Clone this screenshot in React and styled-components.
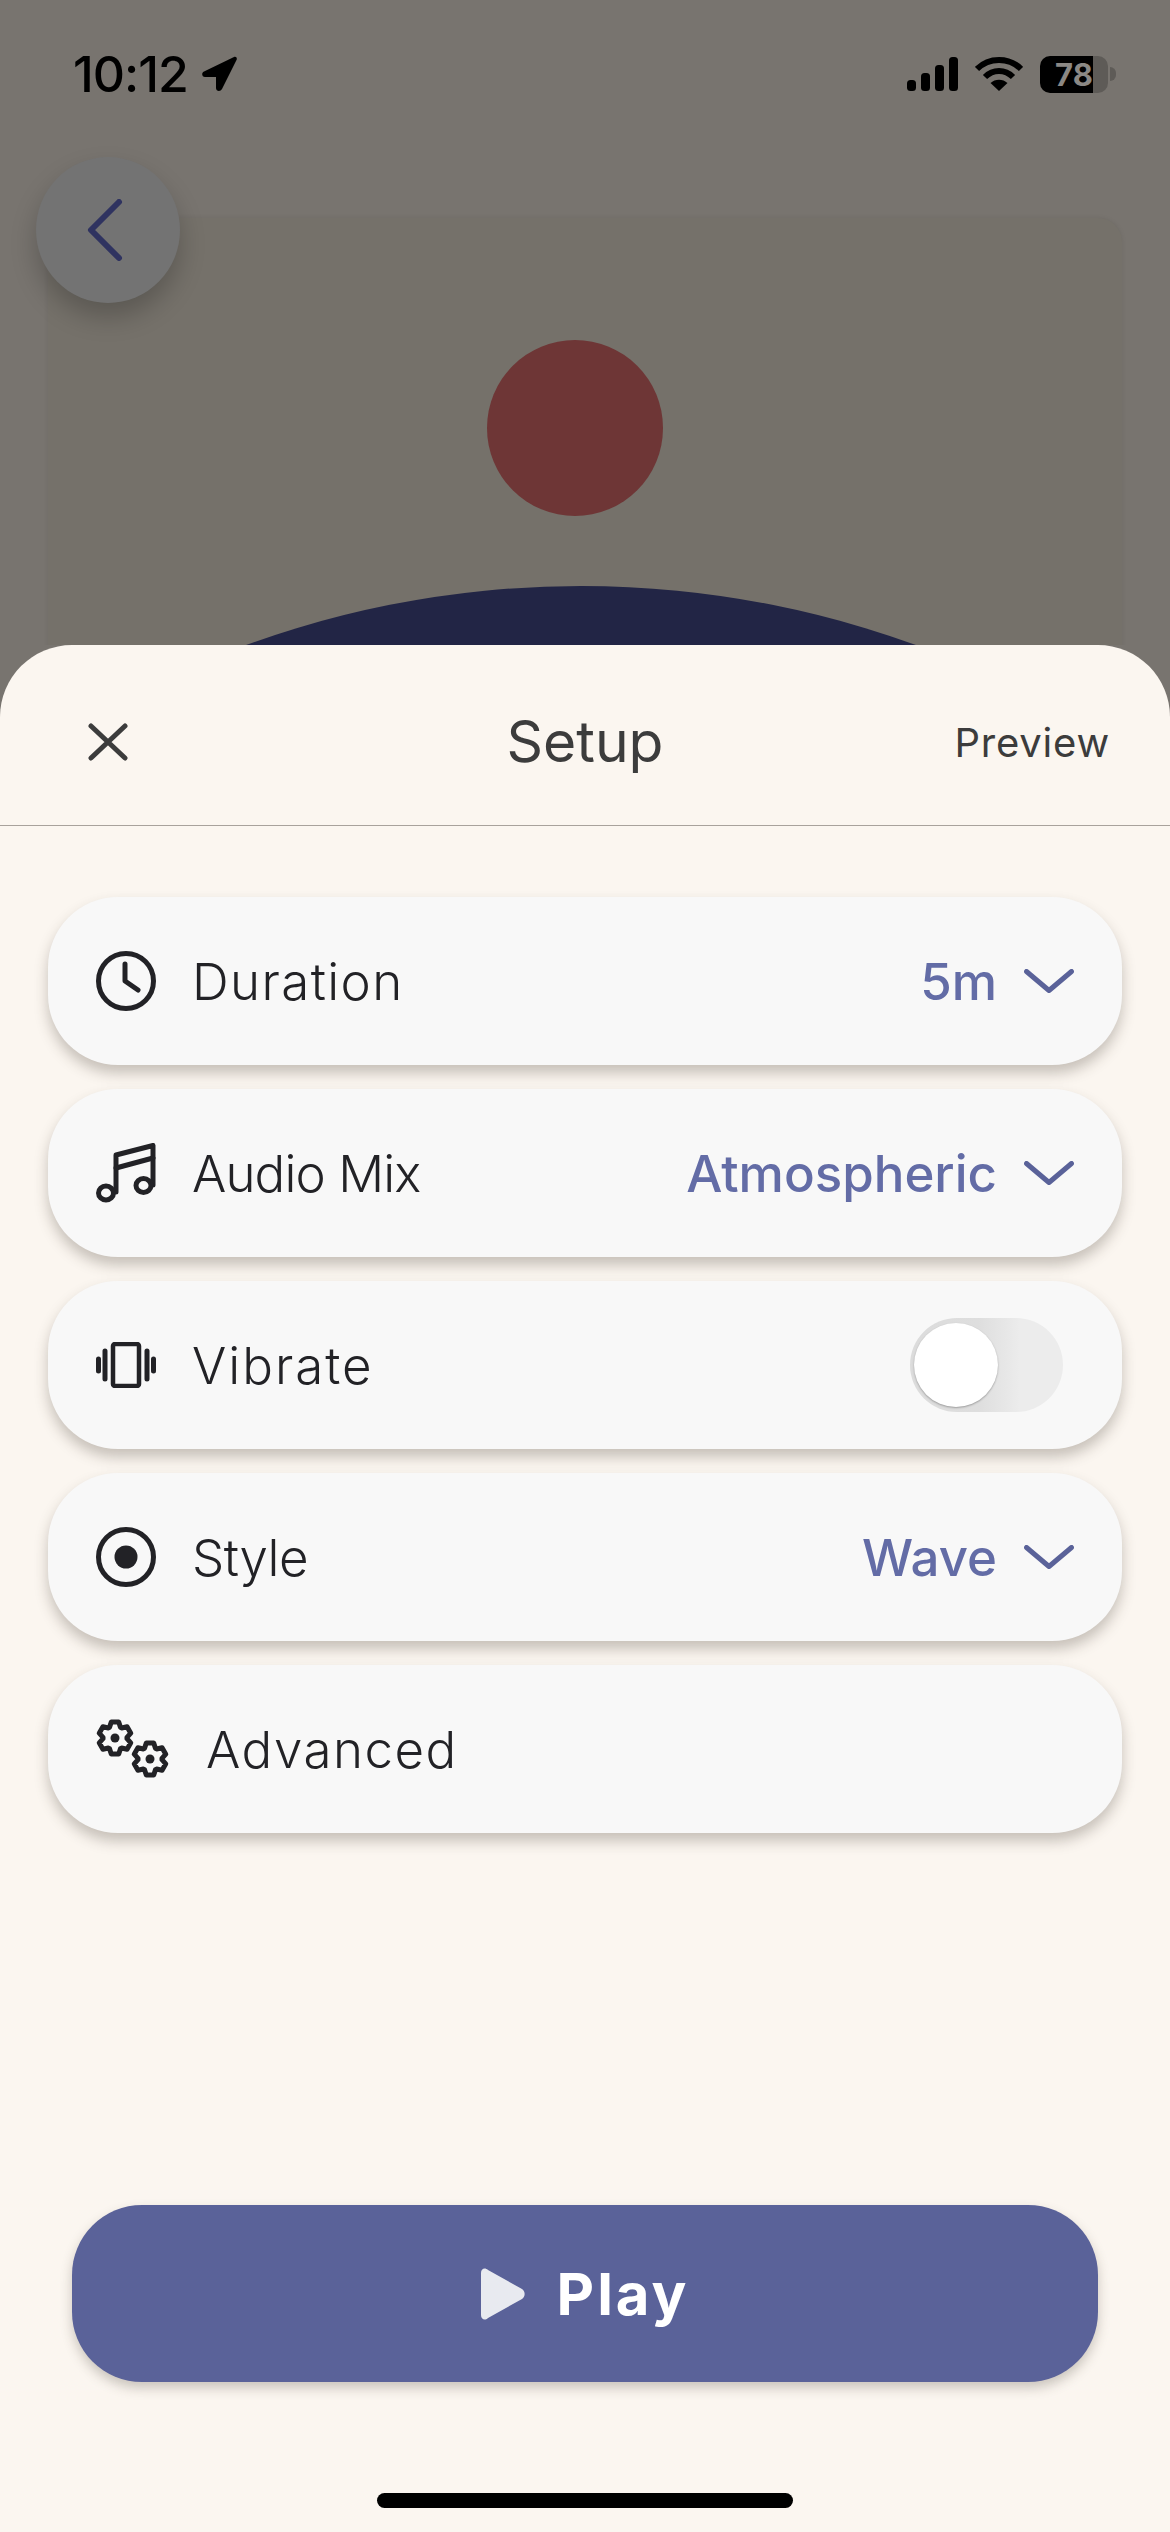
import React from 'react'
import styled, { createGlobalStyle } from 'styled-components'

const GlobalStyle = createGlobalStyle`
  html, body {
    margin: 0;
    padding: 0;
    background: #fbf6f0;
  }
  * {
    box-sizing: border-box;
  }
`
const Screen = styled.div`
  width: 1170px;
  height: 2532px;
  display: flex;
  flex-direction: column;
  background: #78746f;
  overflow: hidden;
  font-family: Inter, "Liberation Sans", sans-serif;
`
const Backdrop = styled.div`
  position: relative;
  height: 645px;
  flex-shrink: 0;
  padding: 0 48px;
  overflow: hidden;
`
const StatusBar = styled.div`
  height: 218px;
  padding: 52px 54px 0 25px;
  margin: 0 -48px 0 0;
  display: flex;
  align-items: flex-start;
  justify-content: space-between;
  color: #000;
`
const TimeGroup = styled.div`
  display: flex;
  align-items: center;
  gap: 13px;
  height: 44px;
`
const Time = styled.span`
  font-size: 50px;
  font-weight: 500;
  letter-spacing: -1px;
  line-height: 44px;
`
const StatusIcons = styled.div`
  display: flex;
  align-items: center;
  gap: 17px;
  height: 44px;
`
const Battery = styled.div`
  width: 68px;
  height: 37px;
  border-radius: 10px;
  background: linear-gradient(90deg, #000 53px, #5e5b57 53px);
  display: flex;
  align-items: center;
  justify-content: center;
  color: #8b8884;
  font-size: 31px;
  font-weight: 700;
  line-height: 37px;
`
const BatteryNub = styled.div`
  width: 6px;
  height: 14px;
  margin-left: -15px;
  border-radius: 0 6px 6px 0;
  background: #5e5b57;
`
const PreviewCard = styled.div`
  position: relative;
  height: 600px;
  border-radius: 24px;
  background: #75716a;
  box-shadow: 0 0 5px rgba(0, 0, 0, 0.08);
  padding: 122px 20px 0 0;
  overflow: hidden;
`
const RedDot = styled.div`
  width: 176px;
  height: 176px;
  margin: 0 auto;
  border-radius: 50%;
  background: #6e3636;
`
const Hill = styled.div`
  position: absolute;
  top: 368px;
  left: 50%;
  width: 1960px;
  height: 1960px;
  margin-left: -984px;
  border-radius: 50%;
  background: #222545;
`
const BackButton = styled.div`
  position: absolute;
  top: 157px;
  left: 36px;
  width: 144px;
  height: 146px;
  padding-right: 6px;
  border-radius: 50%;
  background: #737373;
  box-shadow: 0 14px 26px rgba(0, 0, 0, 0.22);
  display: flex;
  align-items: center;
  justify-content: center;
`
const Sheet = styled.div`
  flex: 1;
  display: flex;
  flex-direction: column;
  background: #fbf6f0;
  border-radius: 72px 72px 0 0;
`
const SheetHeader = styled.div`
  position: relative;
  height: 181px;
  flex-shrink: 0;
  padding: 14px 60px 0 88px;
  display: flex;
  align-items: center;
  justify-content: space-between;
  border-bottom: 1px solid #a8a29c;
`
const Title = styled.div`
  position: absolute;
  left: 0;
  right: 0;
  text-align: center;
  font-size: 57px;
  font-weight: 400;
  color: #3c3c3c;
  line-height: 60px;
`
const PreviewLink = styled.div`
  font-size: 40px;
  font-weight: 400;
  color: #3c3c3c;
  letter-spacing: 0.8px;
`
const Rows = styled.div`
  padding: 71px 48px 0;
  display: flex;
  flex-direction: column;
  gap: 24px;
`
const Row = styled.div`
  height: 168px;
  padding: 0 48px;
  border-radius: 70px;
  display: flex;
  align-items: center;
  background: #f8f8f8;
  box-shadow: 0 8px 14px rgba(60, 50, 40, 0.28);
`
const IconSlot = styled.div`
  width: ${props => props.$wide ? '74px' : '60px'};
  height: 78px;
  margin-right: ${props => props.$wide ? '36px' : '36px'};
  flex-shrink: 0;
  display: flex;
  align-items: center;
  justify-content: center;
`
const Label = styled.div`
  flex: 1;
  font-size: 51px;
  font-weight: 300;
  color: #222226;
  letter-spacing: ${props => props.$tracking}px;
`
const Value = styled.div`
  font-size: 51px;
  font-weight: 450;
  color: #636ca6;
`
const Chevron = styled.svg`
  width: 50px;
  height: 24px;
  margin-left: 27px;
  flex-shrink: 0;
`
const Toggle = styled.div`
  width: 153px;
  height: 94px;
  margin-right: 11px;
  border-radius: 47px;
  background: linear-gradient(90deg, #dcdcdc 0, #dedede 45%, #ececec 72%);
  display: flex;
  align-items: center;
`
const Knob = styled.div`
  width: 84px;
  height: 84px;
  margin-left: 4px;
  border-radius: 50%;
  background: #fff;
  box-shadow: 0 1px 2px rgba(0, 0, 0, 0.3);
`
const PlayArea = styled.div`
  margin-top: auto;
  display: flex;
  flex-direction: column;
  align-items: center;
`
const PlayButton = styled.div`
  width: 1026px;
  height: 177px;
  border-radius: 70px;
  display: flex;
  align-items: center;
  justify-content: center;
  gap: 32px;
  background: #5a6299;
  box-shadow: 0 6px 12px rgba(60, 50, 40, 0.25);
`
const PlayText = styled.span`
  font-size: 58px;
  font-weight: 700;
  color: #fff;
  letter-spacing: 3px;
`
const HomeBar = styled.div`
  width: 416px;
  height: 15px;
  margin: 111px 0 24px;
  border-radius: 8px;
  background: #000;
`

const ChevronDown = () => (
  <Chevron viewBox="0 0 50 24" fill="none" stroke="#5a6299" strokeWidth="5" strokeLinecap="round" strokeLinejoin="round">
    <path d="M2.5 2.5 L25 21.5 L47.5 2.5" />
  </Chevron>
)

// six toothed gear outline, built around the origin
const gearPath = () => {
  const points = []
  for (let i = 0; i < 6; i++) {
    const tooth = -90 + i * 60
    const steps = [[-27, 12], [-13, 16.5], [13, 16.5], [27, 12]]
    steps.forEach(([offset, radius]) => {
      const a = (tooth + offset) * Math.PI / 180
      points.push(`${(radius * Math.cos(a)).toFixed(2)} ${(radius * Math.sin(a)).toFixed(2)}`)
    })
  }
  return 'M' + points.join(' L') + ' Z'
}

const Gear = ({ cx, cy }) => (
  <g transform={`translate(${cx} ${cy})`}>
    <path d={gearPath()} fill="none" stroke="#222226" strokeWidth="5" strokeLinejoin="round" />
    <circle r="4.5" fill="#222226" />
  </g>
)

const icons = {
  clock: (
    <svg width="60" height="60" viewBox="0 0 60 60" fill="none" stroke="#222226" strokeWidth="5" strokeLinecap="round" strokeLinejoin="round">
      <circle cx="30" cy="30" r="27.5" />
      <path d="M29 13 V30 L42 39" />
    </svg>
  ),
  music: (
    <svg width="60" height="60" viewBox="0 0 60 60" fill="none" stroke="#222226" strokeWidth="5" strokeLinecap="round" strokeLinejoin="round">
      <path d="M20 49 V12 L57 2.5 V42" />
      <path d="M20 25 L57 15" />
      <ellipse cx="10" cy="50" rx="7.5" ry="7" />
      <ellipse cx="47.5" cy="42.5" rx="7.5" ry="7" />
    </svg>
  ),
  vibrate: (
    <svg width="60" height="46" viewBox="0 0 60 46" fill="none" stroke="#222226" strokeLinecap="round" strokeLinejoin="round">
      <rect x="17" y="2" width="26" height="42" rx="2" strokeWidth="4.5" />
      <path d="M9 9 V37 M51 9 V37" strokeWidth="5" />
      <path d="M2.5 17 V29 M57.5 17 V29" strokeWidth="5" />
    </svg>
  ),
  style: (
    <svg width="60" height="60" viewBox="0 0 60 60" fill="none">
      <circle cx="30" cy="30" r="27.5" stroke="#222226" strokeWidth="5" />
      <circle cx="30" cy="30" r="11.5" fill="#222226" />
    </svg>
  ),
  gears: (
    <svg width="74" height="60" viewBox="0 0 74 60">
      <Gear cx={19} cy={19} />
      <Gear cx={54} cy={40} />
    </svg>
  ),
}

const settings = [
  { label: 'Duration', icon: 'clock', value: '5m', tracking: 1.4 },
  { label: 'Audio Mix', icon: 'music', value: 'Atmospheric', tracking: -0.9 },
  { label: 'Vibrate', icon: 'vibrate', toggle: true, tracking: 2 },
  { label: 'Style', icon: 'style', value: 'Wave', tracking: -0.5 },
  { label: 'Advanced', icon: 'gears', wide: true, tracking: 1.5 },
]

export default function App() {
  return (
    <Screen>
      <GlobalStyle />
      <Backdrop>
        <StatusBar>
          <TimeGroup>
            <Time>10:12</Time>
            <svg width="36" height="36" viewBox="0 0 36 36" fill="#000">
              <path d="M33 1 L3 15.5 C0 17 1 21 4 21 L15 21 L15 32 C15 35.5 19.5 36 21 33 L35.5 4 C36.5 2 35 0 33 1 Z" />
            </svg>
          </TimeGroup>
          <StatusIcons>
            <svg width="51" height="34" viewBox="0 0 51 34" fill="#000">
              <rect x="0" y="23" width="9" height="11" rx="3.5" />
              <rect x="14" y="16" width="9" height="18" rx="3.5" />
              <rect x="28" y="8" width="9" height="26" rx="3.5" />
              <rect x="42" y="0" width="9" height="34" rx="3.5" />
            </svg>
            <svg width="48" height="36" viewBox="0 0 48 36" fill="none" stroke="#000" strokeWidth="6">
              <path d="M2 13 C14 1 34 1 46 13" />
              <path d="M10 21 C18 13 30 13 38 21" />
              <path d="M24 35 L15.5 27 C20 22.5 28 22.5 32.5 27 Z" fill="#000" stroke="none" />
            </svg>
            <Battery>78</Battery>
            <BatteryNub />
          </StatusIcons>
        </StatusBar>
        <PreviewCard>
          <RedDot />
          <Hill />
        </PreviewCard>
        <BackButton>
          <svg width="36" height="62" viewBox="0 0 36 62" fill="none" stroke="#2f3360" strokeWidth="6" strokeLinecap="round" strokeLinejoin="round">
            <path d="M32 3 L4 31 L32 59" />
          </svg>
        </BackButton>
      </Backdrop>
      <Sheet>
        <SheetHeader>
          <svg width="40" height="38" viewBox="0 0 40 38" fill="none" stroke="#3c3c3c" strokeWidth="5" strokeLinecap="round">
            <path d="M3 3 L37 35 M37 3 L3 35" />
          </svg>
          <Title>Setup</Title>
          <PreviewLink>Preview</PreviewLink>
        </SheetHeader>
        <Rows>
          {settings.map(item => (
            <Row key={item.label}>
              <IconSlot $wide={item.wide}>{icons[item.icon]}</IconSlot>
              <Label $tracking={item.tracking}>{item.label}</Label>
              {item.value && <Value>{item.value}</Value>}
              {item.value && <ChevronDown />}
              {item.toggle && (
                <Toggle>
                  <Knob />
                </Toggle>
              )}
            </Row>
          ))}
        </Rows>
        <PlayArea>
          <PlayButton>
            <svg width="44" height="52" viewBox="0 0 44 52" fill="#e8eaf0">
              <path d="M0 5 C0 0.5 4 -1 7 2 L41 21 C44.5 23.5 44.5 28.5 41 31 L7 50 C4 53 0 51.5 0 47 Z" />
            </svg>
            <PlayText>Play</PlayText>
          </PlayButton>
          <HomeBar />
        </PlayArea>
      </Sheet>
    </Screen>
  )
}
